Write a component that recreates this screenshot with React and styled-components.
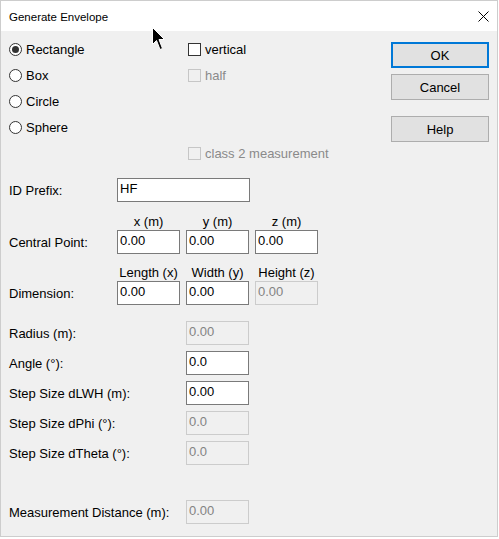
import React from "react";
import styled, { createGlobalStyle } from "styled-components";

const GlobalStyle = createGlobalStyle`
  html, body {
    margin: 0;
    padding: 0;
    background: #ffffff;
  }
  body {
    font-family: "Liberation Sans", Arial, sans-serif;
    font-size: 13px;
    color: #000000;
  }
  * {
    box-sizing: border-box;
  }
`;

const Window = styled.div`
  position: relative;
  width: 498px;
  height: 537px;
  border: 1px solid #cdcdcd;
  display: flex;
  flex-direction: column;
  background: #f0f0f0;
`;

const TitleBar = styled.div`
  height: 30px;
  flex: none;
  background: #ffffff;
  display: flex;
  align-items: center;
  justify-content: space-between;
  padding: 0 8px 0 8px;
`;

const Title = styled.span`
  font-size: 11.5px;
  margin-top: 1px;
`;

const Body = styled.div`
  flex: 1;
  display: flex;
  padding-left: 8px;
`;

const FormColumn = styled.div`
  flex: 1;
  display: flex;
  flex-direction: column;
`;

const OptionGrid = styled.div`
  display: grid;
  grid-template-columns: 179px auto;
  grid-auto-rows: 26px;
  padding-top: 5px;
`;

const Option = styled.label`
  display: flex;
  align-items: center;
  gap: 4px;
  line-height: 15px;
  color: ${(p) => (p.$disabled ? "#8a8a8a" : "#000000")};
`;

const RadioMark = styled.span`
  width: 13px;
  height: 13px;
  border-radius: 50%;
  border: 1px solid #333333;
  background: #ffffff;
  display: flex;
  align-items: center;
  justify-content: center;
  &::after {
    content: "";
    display: ${(p) => (p.$checked ? "block" : "none")};
    width: 7px;
    height: 7px;
    border-radius: 50%;
    background: #333333;
  }
`;

const CheckMark = styled.span`
  width: 13px;
  height: 13px;
  border: 1px solid ${(p) => (p.$disabled ? "#c6c6c6" : "#333333")};
  background: ${(p) => (p.$disabled ? "#f0f0f0" : "#ffffff")};
`;

const Row = styled.div`
  display: flex;
  align-items: center;
  margin-top: ${(p) => p.$top || 0}px;
`;

const Label = styled.span`
  width: ${(p) => p.$width}px;
  flex: none;
  line-height: 15px;
`;

const HeaderRow = styled.div`
  display: flex;
  align-items: flex-end;
  gap: 6px;
  height: ${(p) => p.$height}px;
  padding-left: 108px;
  padding-bottom: 1px;
`;

const ColumnHead = styled.span`
  width: 63px;
  text-align: center;
  line-height: 15px;
  white-space: nowrap;
`;

const Fields = styled.div`
  display: flex;
  gap: 6px;
`;

const Field = styled.div`
  width: ${(p) => p.$width || 63}px;
  height: 24px;
  padding: 2px 2px 0;
  line-height: 15px;
  border: 1px solid ${(p) => (p.$disabled ? "#cccccc" : "#7a7a7a")};
  background: ${(p) => (p.$disabled ? "#f0f0f0" : "#ffffff")};
  color: ${(p) => (p.$disabled ? "#838383" : "#000000")};
`;

const ButtonColumn = styled.div`
  width: 98px;
  flex: none;
  margin-right: 8px;
  padding-top: 11px;
  display: flex;
  flex-direction: column;
`;

const Button = styled.button`
  height: 26px;
  margin-top: ${(p) => p.$top || 0}px;
  font-family: "Liberation Sans", Arial, sans-serif;
  font-size: 13px;
  color: #000000;
  background: #e1e1e1;
  border: ${(p) => (p.$default ? "2px solid #0078d7" : "1px solid #adadad")};
  padding: 0;
`;

const Pointer = styled.svg`
  position: absolute;
  left: 151px;
  top: 26px;
  pointer-events: none;
`;

const CloseIcon = () => (
  <svg width="11" height="11" viewBox="0 0 11 11">
    <path d="M0.5 0.5 L10.5 10.5 M10.5 0.5 L0.5 10.5" stroke="#000" strokeWidth="1" />
  </svg>
);

const Radio = ({ checked, children }) => (
  <Option>
    <RadioMark $checked={checked} />
    {children}
  </Option>
);

const Check = ({ disabled, children }) => (
  <Option $disabled={disabled}>
    <CheckMark $disabled={disabled} />
    {children}
  </Option>
);

const singleRows = [
  { label: "Radius (m):", value: "0.00", disabled: true, top: 16 },
  { label: "Angle (°):", value: "0.0", top: 6 },
  { label: "Step Size dLWH (m):", value: "0.00", top: 6 },
  { label: "Step Size dPhi (°):", value: "0.0", disabled: true, top: 6 },
  { label: "Step Size dTheta (°):", value: "0.0", disabled: true, top: 6 },
  { label: "Measurement Distance (m):", value: "0.00", disabled: true, top: 35 },
];

export default function App() {
  return (
    <>
      <GlobalStyle />
      <Window>
        <TitleBar>
          <Title>Generate Envelope</Title>
          <CloseIcon />
        </TitleBar>
        <Body>
          <FormColumn>
            <OptionGrid>
              <Radio checked>Rectangle</Radio>
              <Check>vertical</Check>
              <Radio>Box</Radio>
              <Check disabled>half</Check>
              <Radio>Circle</Radio>
              <span />
              <Radio>Sphere</Radio>
              <span />
              <span />
              <Check disabled>class 2 measurement</Check>
            </OptionGrid>

            <Row $top={12}>
              <Label $width={108}>ID Prefix:</Label>
              <Field $width={133}>HF</Field>
            </Row>

            <HeaderRow $height={28}>
              <ColumnHead>x (m)</ColumnHead>
              <ColumnHead>y (m)</ColumnHead>
              <ColumnHead>z (m)</ColumnHead>
            </HeaderRow>
            <Row>
              <Label $width={108}>Central Point:</Label>
              <Fields>
                <Field>0.00</Field>
                <Field>0.00</Field>
                <Field>0.00</Field>
              </Fields>
            </Row>

            <HeaderRow $height={27}>
              <ColumnHead>Length (x)</ColumnHead>
              <ColumnHead>Width (y)</ColumnHead>
              <ColumnHead>Height (z)</ColumnHead>
            </HeaderRow>
            <Row>
              <Label $width={108}>Dimension:</Label>
              <Fields>
                <Field>0.00</Field>
                <Field>0.00</Field>
                <Field $disabled>0.00</Field>
              </Fields>
            </Row>

            {singleRows.map((r) => (
              <Row key={r.label} $top={r.top}>
                <Label $width={177}>{r.label}</Label>
                <Field $disabled={r.disabled}>{r.value}</Field>
              </Row>
            ))}
          </FormColumn>

          <ButtonColumn>
            <Button $default>OK</Button>
            <Button $top={6}>Cancel</Button>
            <Button $top={16}>Help</Button>
          </ButtonColumn>
        </Body>

        <Pointer width="14" height="24" viewBox="0 0 14 24">
          <path
            d="M0.5 0.5 V17.5 L4.5 13.5 L8 22.5 L10.5 21.5 L7 12.5 H12.5 Z"
            fill="#000"
            stroke="#fff"
            strokeWidth="1"
            strokeLinejoin="round"
          />
        </Pointer>
      </Window>
    </>
  );
}
